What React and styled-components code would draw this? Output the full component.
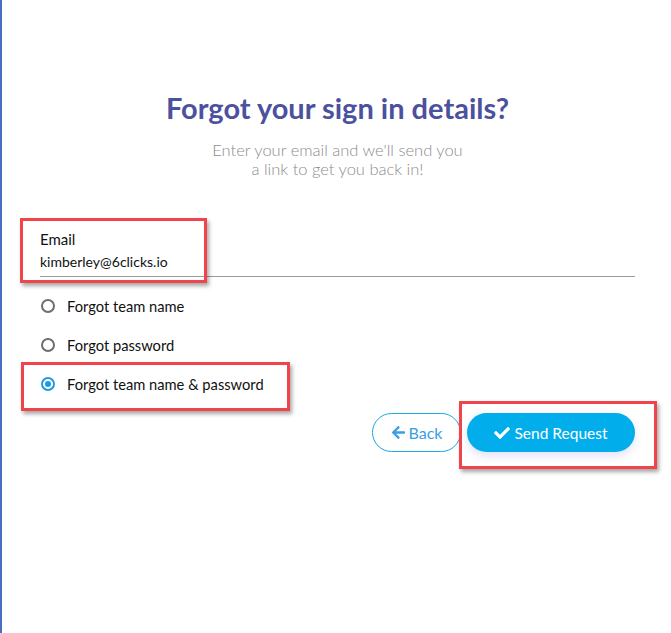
import React, { useState } from "react";
import styled, { createGlobalStyle } from "styled-components";
import { FaArrowLeft, FaCheck } from "react-icons/fa";

const GlobalStyle = createGlobalStyle`
  html, body {
    margin: 0;
    padding: 0;
    background: #ffffff;
  }
  body {
    font-family: Lato, "Open Sans", sans-serif;
  }
`;

const options = [
  { id: "team", label: "Forgot team name" },
  { id: "password", label: "Forgot password" },
  { id: "both", label: "Forgot team name & password" },
];

const App = () => {
  const [email, setEmail] = useState("kimberley@6clicks.io");
  const [choice, setChoice] = useState("both");

  return (
    <>
      <GlobalStyle />
      <Page>
        <Header>
          <Title>Forgot your sign in details?</Title>
          <Subtitle>
            Enter your email and we'll send you
            <br />
            a link to get you back in!
          </Subtitle>
        </Header>

        <Form>
          <Field>
            <Label htmlFor="email">Email</Label>
            <EmailInput
              id="email"
              type="text"
              value={email}
              onChange={event => setEmail(event.target.value)}
            />
          </Field>

          <RadioList>
            {options.map(option => (
              <RadioRow key={option.id}>
                <RadioCircle
                  checked={choice === option.id}
                  onClick={() => setChoice(option.id)}
                />
                <RadioLabel onClick={() => setChoice(option.id)}>
                  {option.label}
                </RadioLabel>
              </RadioRow>
            ))}
          </RadioList>

          <Actions>
            <BackButton type="button">
              <FaArrowLeft size={15} />
              Back
            </BackButton>
            <SendButton type="button">
              <FaCheck size={16} />
              Send Request
            </SendButton>
          </Actions>
        </Form>

        <Highlight $left={18} $top={218} $width={187} $height={65} />
        <Highlight $left={19} $top={362} $width={269} $height={49} />
        <Highlight $left={457} $top={401} $width={198} $height={68} />
      </Page>
    </>
  );
};

const Page = styled.div`
  position: relative;
  box-sizing: border-box;
  min-height: 633px;
  border-left: 2px solid #4a6fc0;
  padding: 92px 36px 0 38px;
`;

const Header = styled.div`
  display: flex;
  flex-direction: column;
  align-items: center;
  text-align: center;
`;

const Title = styled.h1`
  margin: 0;
  font-family: Lato, sans-serif;
  font-weight: 700;
  font-size: 29px;
  line-height: 32px;
  color: #4b519d;
`;

const Subtitle = styled.p`
  margin: 17px 0 0;
  font-family: Lato, sans-serif;
  font-weight: 300;
  font-size: 16.5px;
  line-height: 19px;
  color: #8c8c8c;
`;

const Form = styled.div`
  margin-top: 51px;
  display: flex;
  flex-direction: column;
`;

const Field = styled.div`
  display: flex;
  flex-direction: column;
`;

const Label = styled.label`
  font-size: 15px;
  line-height: 18px;
  color: #111111;
`;

const EmailInput = styled.input`
  margin-top: 5px;
  padding: 0 0 6px;
  border: none;
  border-bottom: 1px solid #9a9a9a;
  outline: none;
  font-family: Lato, sans-serif;
  font-size: 14px;
  line-height: 17px;
  color: #111111;
  background: transparent;
`;

const RadioList = styled.div`
  margin-top: 19px;
  display: flex;
  flex-direction: column;
  gap: 19px;
`;

const RadioRow = styled.div`
  display: flex;
  align-items: center;
  gap: 12px;
  height: 20px;
  padding-left: 1px;
`;

const RadioCircle = styled.span`
  box-sizing: border-box;
  width: 14px;
  height: 14px;
  border-radius: 50%;
  border: 2px solid ${props => (props.checked ? "#1a9be2" : "#6e6e6e")};
  display: flex;
  align-items: center;
  justify-content: center;
  cursor: pointer;

  &::after {
    content: "";
    width: 6px;
    height: 6px;
    border-radius: 50%;
    background: #1a9be2;
    display: ${props => (props.checked ? "block" : "none")};
  }
`;

const RadioLabel = styled.span`
  font-size: 14.7px;
  color: #111111;
  cursor: pointer;
`;

const Actions = styled.div`
  margin-top: 19px;
  display: flex;
  justify-content: flex-end;
  gap: 6px;
`;

const BackButton = styled.button`
  box-sizing: border-box;
  width: 89px;
  height: 39px;
  border: 1px solid #1ba8e3;
  border-radius: 20px;
  background: #ffffff;
  color: #3a9ee4;
  font-family: Lato, sans-serif;
  font-size: 16px;
  display: flex;
  align-items: center;
  justify-content: center;
  gap: 3px;
  cursor: pointer;
`;

const SendButton = styled.button`
  box-sizing: border-box;
  width: 168px;
  height: 39px;
  border: none;
  border-radius: 20px;
  background: #02adeb;
  color: #ffffff;
  font-family: Lato, sans-serif;
  font-size: 15.5px;
  display: flex;
  align-items: center;
  justify-content: center;
  gap: 4px;
  box-shadow: 0 4px 10px rgba(90, 90, 220, 0.18);
  cursor: pointer;
`;

const Highlight = styled.div`
  position: absolute;
  box-sizing: border-box;
  left: ${props => props.$left}px;
  top: ${props => props.$top}px;
  width: ${props => props.$width}px;
  height: ${props => props.$height}px;
  border: 3px solid #f0444a;
  box-shadow: 2px 3px 4px rgba(0, 0, 0, 0.35);
  pointer-events: none;
`;

export default App;
